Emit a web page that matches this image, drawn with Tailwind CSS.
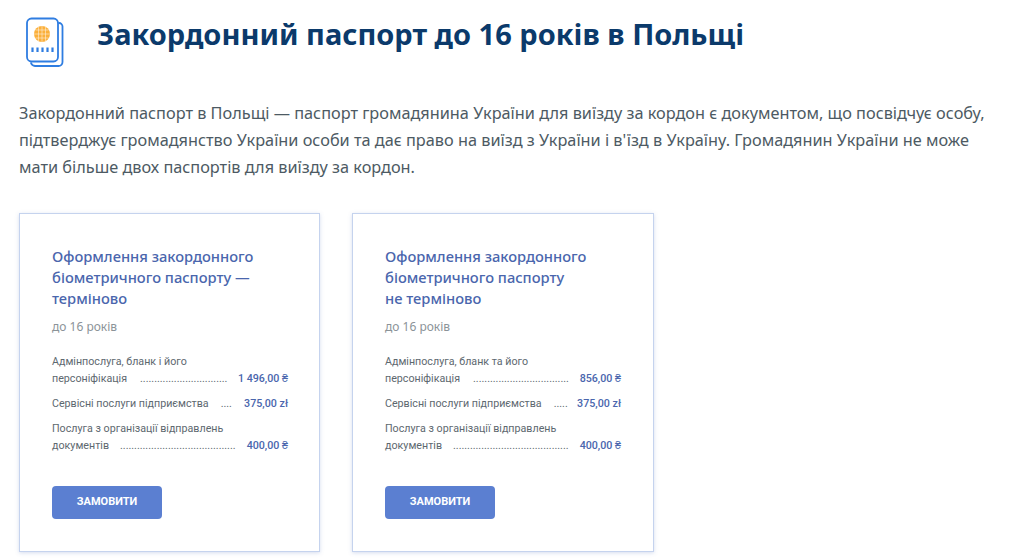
<!DOCTYPE html>
<html lang="uk">
  <head>
    <meta charset="UTF-8" />
    <title>Закордонний паспорт до 16 років в Польщі</title>
    <script src="https://cdn.jsdelivr.net/npm/@tailwindcss/browser@4"></script>
  </head>
  <body class="bg-white font-['Noto_Sans',sans-serif] overflow-hidden h-[559px]">
    <div class="flex items-start pl-[25px] pt-[17px]">
      <svg class="w-[40px] h-[52px]" viewBox="0 0 40 52" fill="none">
        <path d="M34 6 h0 a3.5 3.5 0 0 1 3.5 3.5 V45 a4 4 0 0 1 -4 4 H10 a4.5 4.5 0 0 1 -4 -3" stroke="#2f7de1" stroke-width="1.8" stroke-linecap="round" />
        <rect x="2" y="1.5" width="31" height="43" rx="4.5" stroke="#2f7de1" stroke-width="1.8" fill="#fff" />
        <circle cx="17" cy="17" r="8" fill="#fbb03b" />
        <path d="M9 17 h16 M17 9 v16 M10.5 13 h13 M10.5 21 h13 M13.5 9.8 v14.4 M20.5 9.8 v14.4" stroke="#fff" stroke-width="0.6" opacity="0.8" />
        <path d="M7.5 30.5 v4.5 M12.5 30.5 v4.5 M17.5 30.5 v4.5 M22.5 30.5 v4.5 M27.5 30.5 v4.5" stroke="#2f7de1" stroke-width="2.2" />
      </svg>
      <h1 class="ml-[32px] mt-[-1px] text-[29px] leading-[36px] font-bold text-[#0b3a6b]">Закордонний паспорт до 16 років в Польщі</h1>
    </div>

    <p class="mt-[31px] ml-[19px] w-[980px] text-[16.3px] leading-[27px] text-[#4d5a63]">Закордонний паспорт в Польщі — паспорт громадянина України для виїзду за кордон є документом, що посвідчує особу, підтверджує громадянство України особи та дає право на виїзд з України і в'їзд в Україну. Громадянин України не може мати більше двох паспортів для виїзду за кордон.</p>

    <div class="flex gap-[32px] ml-[19px] mt-[32px]">
      <div class="w-[301px] h-[339px] border border-[#c5d3ee] shadow-[0_1px_4px_rgba(90,120,190,0.25)] pl-[32px] pr-[31px] pt-[32px]">
        <h2 class="text-[14.7px] leading-[21px] font-medium text-[#4a66ad]">Оформлення закордонного біометричного паспорту — терміново</h2>
        <div class="mt-[9px] text-[12px] leading-[18px] text-[#8b9398]">до 16 років</div>
        <div class="mt-[17px] font-['Roboto',sans-serif] text-[10.7px] leading-[17px] text-[#5d686f] whitespace-nowrap">
          <div>Адмінпослуга, бланк і його</div>
          <div class="flex"><span>персоніфікація</span><span class="ml-[13px]">...............................</span><span class="ml-auto font-medium text-[#4a66ad]">1 496,00 ₴</span></div>
          <div class="flex mt-[8px]"><span>Сервісні послуги підприємства</span><span class="ml-[12px]">....</span><span class="ml-auto font-medium text-[#4a66ad]">375,00 zł</span></div>
          <div class="mt-[8px]">Послуга з організації відправлень</div>
          <div class="flex"><span>документів</span><span class="ml-[11px]">.........................................</span><span class="ml-auto font-medium text-[#4a66ad]">400,00 ₴</span></div>
        </div>
        <button class="mt-[32px] block w-[110px] h-[33px] rounded-[4px] bg-[#5b7fd1] text-white font-['Roboto',sans-serif] text-[11px] font-bold">ЗАМОВИТИ</button>
      </div>
      <div class="w-[302px] h-[339px] border border-[#c5d3ee] shadow-[0_1px_4px_rgba(90,120,190,0.25)] pl-[32px] pr-[32px] pt-[32px]">
        <h2 class="text-[14.7px] leading-[21px] font-medium text-[#4a66ad]">Оформлення закордонного біометричного паспорту<br />не терміново</h2>
        <div class="mt-[9px] text-[12px] leading-[18px] text-[#8b9398]">до 16 років</div>
        <div class="mt-[17px] font-['Roboto',sans-serif] text-[10.7px] leading-[17px] text-[#5d686f] whitespace-nowrap">
          <div>Адмінпослуга, бланк та його</div>
          <div class="flex"><span>персоніфікація</span><span class="ml-[13px]">..................................</span><span class="ml-auto font-medium text-[#4a66ad]">856,00 ₴</span></div>
          <div class="flex mt-[8px]"><span>Сервісні послуги підприємства</span><span class="ml-[12px]">.....</span><span class="ml-auto font-medium text-[#4a66ad]">375,00 zł</span></div>
          <div class="mt-[8px]">Послуга з організації відправлень</div>
          <div class="flex"><span>документів</span><span class="ml-[11px]">.........................................</span><span class="ml-auto font-medium text-[#4a66ad]">400,00 ₴</span></div>
        </div>
        <button class="mt-[32px] block w-[110px] h-[33px] rounded-[4px] bg-[#5b7fd1] text-white font-['Roboto',sans-serif] text-[11px] font-bold">ЗАМОВИТИ</button>
      </div>
    </div>
  </body>
</html>
